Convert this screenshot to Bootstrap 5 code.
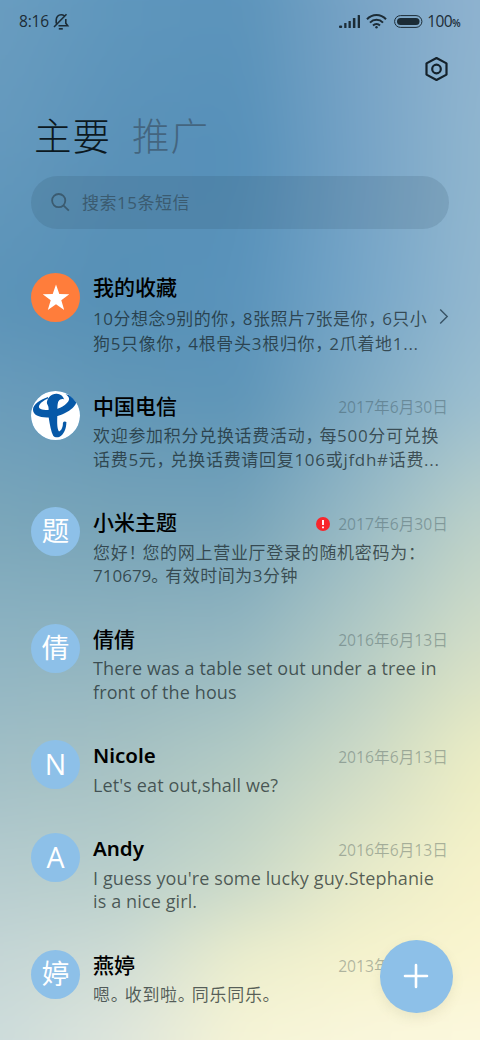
<!DOCTYPE html>
<html lang="zh-CN">
<head>
<meta charset="utf-8">
<meta name="viewport" content="width=device-width, initial-scale=1">
<title>短信</title>
<link href="https://cdn.jsdelivr.net/npm/bootstrap@5.3.0/dist/css/bootstrap.min.css" rel="stylesheet">
<style>
body{font-family:"Open Sans","Noto Sans CJK SC",sans-serif;background:#cddcdb}
.phone{width:480px;height:1040px;color:#16232c;isolation:isolate}
/* wallpaper: horizontal gradients cross-faded from top to bottom, softened */
.wall{inset:-60px;z-index:-1;filter:blur(22px)}
.wall div{position:absolute;inset:0;background:linear-gradient(90deg,var(--a) 60px,var(--b) 180px,var(--c) 300px,var(--d) 420px,var(--e) 540px);-webkit-mask-image:linear-gradient(transparent calc(var(--s) + 60px),#000 calc(var(--t) + 60px));mask-image:linear-gradient(transparent calc(var(--s) + 60px),#000 calc(var(--t) + 60px))}
.wall div:first-child{-webkit-mask-image:none;mask-image:none}
.status{height:42px;padding:1px 20px 0 19px;font-size:15.5px;color:#1c2c36}
.tools{height:54px;padding-right:31px}
.tabs-row{height:80px;padding:0 0 3px 34px;font-family:"Noto Sans CJK SC",sans-serif;font-size:37.5px;letter-spacing:1px}
.tab-on{color:#0c1820;font-weight:300}
.tab-off{color:#44657f;font-weight:300;margin-left:21px}
.search{height:53px;margin:0 31px;padding-left:19px;background:rgba(32,64,86,.14);color:#3b5b70;font-size:17px}
.search span{margin-left:11px;letter-spacing:.5px}
.list{padding:41.5px 31px 0}
.msg{height:116.5px}
.msg.tall{height:118px}
.msg.short{height:93px}
.ava{width:49px;height:49px;margin-top:2.3px;margin-right:13px;padding-bottom:2px;background:#8dc0e8;color:#fff;font-size:27.5px;line-height:1;overflow:hidden}
.ava.pic{padding:0}
.ava.latin{font-size:28.5px;padding-bottom:1px}
.who{height:35.6px}
.tall .who b{position:relative;top:-1px}
.who b{font-weight:500;font-size:21px;color:#000;line-height:35.6px;white-space:nowrap}
.who b.name-en{font-weight:600;font-size:20.5px;font-family:"Noto Sans",sans-serif}
.who time{font-size:15.7px;color:rgba(40,60,65,.34);margin:3px 1px 0 0;white-space:nowrap}
.ln{display:block;white-space:nowrap;font-size:17px;line-height:23.4px;letter-spacing:.7px;color:rgba(20,30,34,.7)}
.tall .ln{line-height:25.2px}
.ln i{font-style:normal;letter-spacing:-3px}
.ln.tight{letter-spacing:.5px}
.ln .num{letter-spacing:0}
.ln.en{font-size:18px;letter-spacing:.12px}
.fab{right:27.5px;top:940px;width:72.5px;height:72.5px;background:#8dc0e8;box-shadow:0 5px 12px rgba(120,120,80,.12)}
svg{display:block;flex:none}
</style>
</head>
<body>
<main class="phone position-relative overflow-hidden">
<div class="wall position-absolute">
<div style="--a:#6a9dc0;--b:#5f97bd;--c:#5c94bb;--d:#79a4c6;--e:#8fb3d0;--s:0px;--t:1px"></div>
<div style="--a:#6499bd;--b:#5a91b8;--c:#5690b9;--d:#76a3c6;--e:#90b6cf;--s:0px;--t:150px"></div>
<div style="--a:#5b93b8;--b:#5690b6;--c:#5a93bb;--d:#76a6c8;--e:#93b8d0;--s:150px;--t:300px"></div>
<div style="--a:#6a9cbb;--b:#6297b7;--c:#5e95b8;--d:#80abc4;--e:#9cbfd0;--s:300px;--t:400px"></div>
<div style="--a:#7aa6ba;--b:#76a3b8;--c:#76a3b9;--d:#98bac5;--e:#bcd1c9;--s:400px;--t:520px"></div>
<div style="--a:#8db3c2;--b:#8fb3bf;--c:#93b6c0;--d:#b2cac5;--e:#d3dec7;--s:520px;--t:640px"></div>
<div style="--a:#a1bfc6;--b:#a6c1c3;--c:#b3cbc4;--d:#cddac6;--e:#edeec4;--s:640px;--t:760px"></div>
<div style="--a:#b7cdcf;--b:#b9cfcc;--c:#cad9c9;--d:#e8ebc9;--e:#f7f3ca;--s:760px;--t:880px"></div>
<div style="--a:#c5d6d6;--b:#cfdcd4;--c:#eceecd;--d:#f6f3cd;--e:#faf5d0;--s:880px;--t:960px"></div>
<div style="--a:#cddcdb;--b:#dfe6dc;--c:#f6f4d6;--d:#f9f6dc;--e:#fbf8de;--s:960px;--t:1040px"></div>
</div>

<header class="status d-flex align-items-center">
<span style="font-weight:500;letter-spacing:-.2px">8:16</span>
<svg style="margin-left:4px" width="17" height="18" viewBox="0 0 17 18" fill="none" stroke="currentColor" stroke-width="1.6"><path d="M3.2 10.5V7.2C3.2 4 5.2 1.8 8.2 1.8c1.3 0 2.3.4 3.2 1.1M12.800 6v4.200l1.900 2.600H5.500M1 14 13.500 1.200"/><path d="M5.800 15.800h4" stroke-width="1.700"/></svg>
<svg class="ms-auto" width="22" height="15" viewBox="0 0 22 15" fill="currentColor"><rect x="0" y="11.500" width="3.200" height="2.500" rx="1"/><rect x="5.200" y="9" width="2.300" height="5" rx=".5"/><rect x="9.500" y="7" width="2.300" height="7" rx=".5"/><rect x="13.900" y="4" width="2.500" height="10" rx=".5"/><rect x="18.700" y="1" width="2.300" height="13" rx=".5"/></svg>
<svg style="margin-left:5px" width="21" height="15" viewBox="0 0 21 15" fill="none" stroke="currentColor" stroke-width="2"><path d="M1 5.300C6.300-.3 14.700-.3 20 5.300M4 8.600c3.700-3.700 9.300-3.700 13 0M7 11.500c2-1.900 5-1.900 7 0"/><circle cx="10.500" cy="13.300" r="1.200" fill="currentColor" stroke="none"/></svg>
<svg style="margin-left:7px" width="29" height="13" viewBox="0 0 29 13"><rect x=".6" y=".6" width="27.300" height="11.800" rx="5.900" fill="none" stroke="currentColor"/><rect x="3" y="3" width="22.500" height="7" rx="3.500" fill="currentColor"/></svg>
<span style="margin-left:4px;letter-spacing:-.6px;font-size:15.500px">100<span style="font-size:10px;font-weight:600">%</span></span>
</header>

<div class="tools d-flex justify-content-end align-items-center">
<svg width="25" height="26" viewBox="0 0 25 26" fill="none" stroke="#14212a" stroke-width="2.200" stroke-linejoin="round"><path d="M12.500 2 22.500 7.400v11.200L12.500 24 2.500 18.600V7.400z"/><circle cx="12.500" cy="13" r="4.300"/></svg>
</div>

<nav class="tabs-row d-flex align-items-center"><span class="tab-on">主要</span><span class="tab-off">推广</span></nav>

<div class="search rounded-pill d-flex align-items-center">
<svg width="21" height="21" viewBox="0 0 21 21" fill="none" stroke="currentColor" stroke-width="1.800"><circle cx="8.700" cy="8.600" r="6.600"/><path d="m13.400 13.400 5.400 5.200"/></svg>
<span>搜索15条短信</span>
</div>

<section class="list">
<article class="msg tall d-flex">
<div class="ava pic rounded-circle flex-shrink-0 d-flex align-items-center justify-content-center" style="background:#ff7d3b"><svg width="28" height="27" viewBox="0 0 28 27" fill="#fff"><path d="m14 .5 3.300 9.600 10 .1-8 6.100 2.900 9.700-8.200-5.800L5.800 26l2.900-9.700-8-6.100 10-.1z"/></svg></div>
<div class="flex-grow-1 position-relative"><div class="who"><b>我的收藏</b></div>
<span class="ln tight">10分想念9别的你<i>，</i>8张照片7张是你<i>，</i>6只小</span>
<span class="ln">狗5只像你<i>，</i>4根骨头3根归你<i>，</i>2爪着地1...</span>
<svg class="position-absolute" style="right:0;top:37px" width="10" height="17" viewBox="0 0 10 17" fill="none" stroke="#385365" stroke-width="1.400"><path d="m1.200 1.500 7 7-7 7"/></svg></div>
</article>

<article class="msg d-flex">
<div class="ava pic rounded-circle flex-shrink-0"><svg width="49" height="49" viewBox="0 0 49 49"><circle cx="24.500" cy="24.500" r="24.500" fill="#fff"/><g fill="#0759a8"><path d="M17 6C8.500 8.800 2 13.500 2 18.700c0 6.200 9.300 9 20 7.200 12.800-2.100 23.500-10 23.300-15.700C45 7.200 41.500 4.500 34.500 3.200c3.500 2.200 4.500 4.600 2.700 7.300C33.500 15.800 25.500 19.300 17 19.100c-6.500-.1-9.700-1.700-9-4.200.8-2.800 4.700-5.700 9-7.500z"/><path d="M33.200 8.400c-1.400-3.700-4.200-6-8-5.700-5 .4-8.400 3.700-9.300 8.300-.4 2.200 1.600 3.200 1.700 6 .1 3-.5 6 .1 9.500 1.200 7.500 2.300 14 4.500 18.200 1.500 1.800 4 2 6 1.200 4.600-1.800 7.100-8 7.200-14.800-1.300-1-2.700-.7-3.500.6.200 4-1.400 7.900-3.900 8.800-2-2.700-1.900-9.100-1.700-15.700.2-6.200-.2-12.300 1.200-14.600 1.300-2 3.400-2.600 5.700-1.800z"/></g></svg></div>
<div class="flex-grow-1"><div class="who d-flex justify-content-between align-items-center"><b>中国电信</b><time>2017年6月30日</time></div>
<span class="ln">欢迎参加积分兑换话费活动<i>，</i>每500分可兑换</span>
<span class="ln">话费5元<i>，</i>兑换话费请回复106或jfdh#话费...</span></div>
</article>

<article class="msg d-flex">
<div class="ava rounded-circle flex-shrink-0 d-flex align-items-center justify-content-center">题</div>
<div class="flex-grow-1"><div class="who d-flex align-items-center"><b class="me-auto">小米主题</b><svg style="margin-right:8px;margin-top:2px" width="14" height="14" viewBox="0 0 14 14"><circle cx="7" cy="7" r="7" fill="#f8262c"/><path d="M7 3v5M7 9.500v1.700" stroke="#fff" stroke-width="1.900"/></svg><time>2017年6月30日</time></div>
<span class="ln">您好<i>！</i>您的网上营业厅登录的随机密码为：</span>
<span class="ln tight"><span class="num">710679</span><i>。</i>有效时间为3分钟</span></div>
</article>

<article class="msg d-flex">
<div class="ava rounded-circle flex-shrink-0 d-flex align-items-center justify-content-center">倩</div>
<div class="flex-grow-1"><div class="who d-flex justify-content-between align-items-center"><b>倩倩</b><time>2016年6月13日</time></div>
<span class="ln en">There was a table set out under a tree in</span>
<span class="ln en">front of the hous</span></div>
</article>

<article class="msg short d-flex">
<div class="ava latin rounded-circle flex-shrink-0 d-flex align-items-center justify-content-center">N</div>
<div class="flex-grow-1"><div class="who d-flex justify-content-between align-items-center"><b class="name-en">Nicole</b><time>2016年6月13日</time></div>
<span class="ln en">Let's eat out,shall we?</span></div>
</article>

<article class="msg d-flex">
<div class="ava latin rounded-circle flex-shrink-0 d-flex align-items-center justify-content-center">A</div>
<div class="flex-grow-1"><div class="who d-flex justify-content-between align-items-center"><b class="name-en">Andy</b><time>2016年6月13日</time></div>
<span class="ln en">I guess you're some lucky guy.Stephanie</span>
<span class="ln en">is a nice girl.</span></div>
</article>

<article class="msg short d-flex">
<div class="ava rounded-circle flex-shrink-0 d-flex align-items-center justify-content-center">婷</div>
<div class="flex-grow-1"><div class="who d-flex justify-content-between align-items-center"><b>燕婷</b><time>2013年6月13日</time></div>
<span class="ln">嗯<i>。</i>收到啦<i>。</i>同乐同乐。</span></div>
</article>
</section>

<button class="fab btn border-0 rounded-circle position-absolute p-0 d-flex align-items-center justify-content-center" aria-label="新建"><svg width="26" height="26" viewBox="0 0 26 26" stroke="#fff" stroke-width="2.600" stroke-linecap="round"><path d="M13 2v22M2 13h22"/></svg></button>
</main>
<script src="https://cdn.jsdelivr.net/npm/bootstrap@5.3.0/dist/js/bootstrap.bundle.min.js"></script>
</body>
</html>
